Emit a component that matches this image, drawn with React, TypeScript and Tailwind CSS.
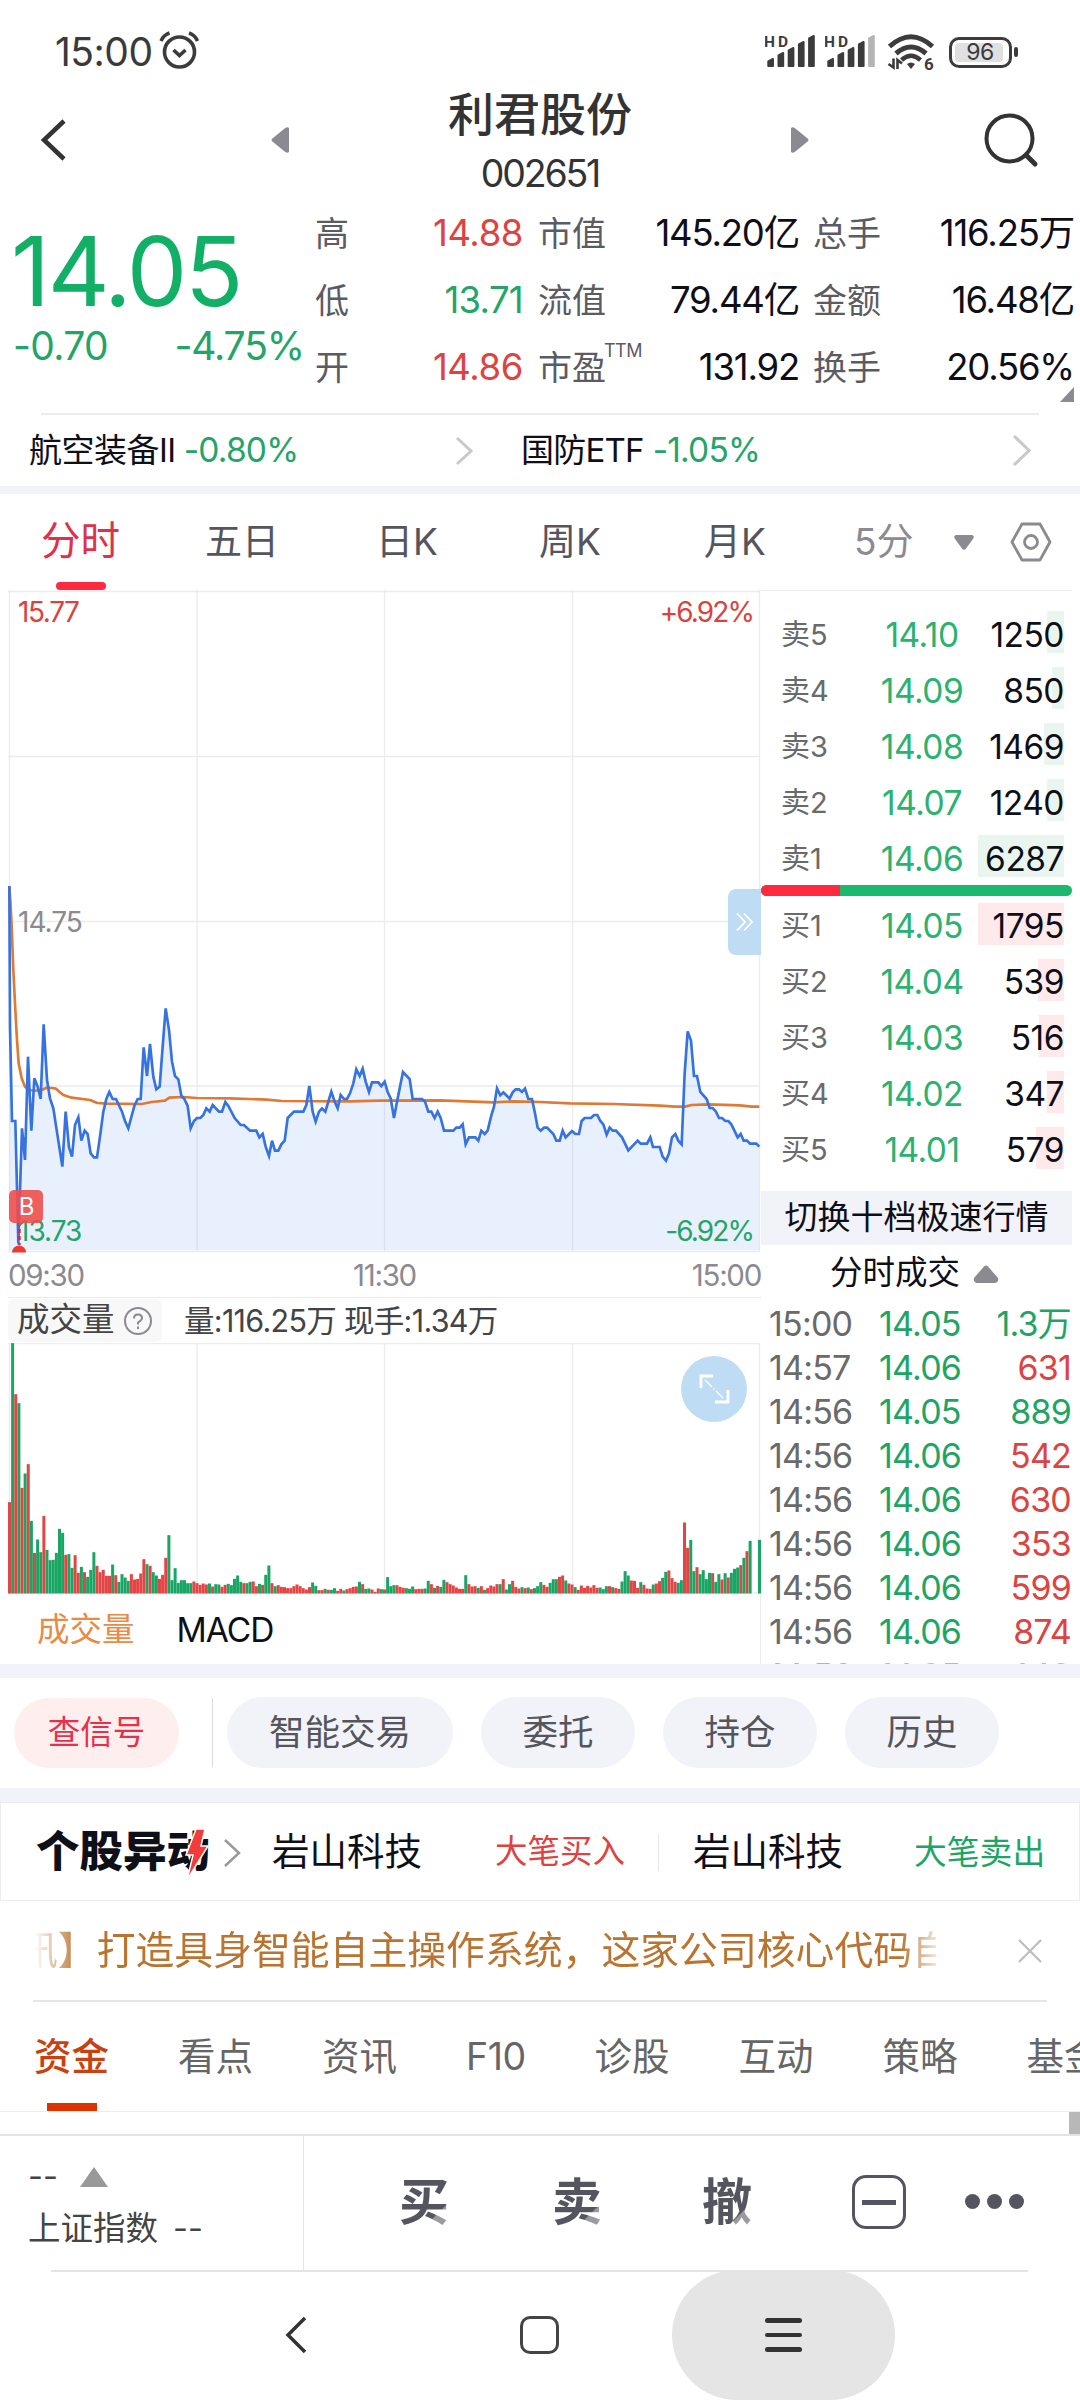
import React from "react";

const LEFT: number[] = [
  28,78,30,500,36,783,46,783,55,1150,66,805,75,900,84,590,94,812,103,655,113,680,122,717,131,493,141,660,150,715,160,745,187,920,197,755,207,862,216,890,225,795,235,772,244,842,254,812,263,822,272,880,282,892,291,892,300,830,310,755,319,717,328,696,338,717,348,717,366,755,375,783,385,805,403,738,413,717,422,717,431,562,441,648,450,552,460,650,469,688,479,680,488,560,497,445,507,510,516,605,525,648,535,658,544,707,553,717,563,738,572,805,582,783,591,774,601,774,610,765,619,745,629,755,638,735,657,755,666,755,676,726,685,738,704,774,722,795,732,795,750,812,769,812,778,832,788,822,797,860,807,888,816,842,825,872,835,872,844,853,854,842,863,774,882,755,910,755,919,735,928,678,938,755,947,785,957,755,966,745,976,755,994,695,1003,722,1013,745,1022,705,1032,717,1041,717,1050,700,1060,670,1069,628,1079,648,1088,626,1097,665,1107,696,1116,667,1135,667,1144,678,
];
const RIGHT: number[] = [
  14,665,23,696,32,715,42,774,51,725,60,680,69,636,89,657,98,717,126,717,135,725,145,755,154,755,164,774,173,755,182,774,192,812,220,812,229,803,239,803,248,793,257,853,267,832,286,832,295,842,304,812,314,822,323,812,333,770,342,740,351,685,361,706,370,697,389,716,398,697,407,688,417,688,426,696,435,686,445,717,456,717,465,760,473,803,482,812,492,803,501,803,520,822,529,842,539,842,548,812,557,832,576,813,586,822,597,822,605,783,614,774,633,774,642,765,652,765,661,783,670,793,680,824,689,803,698,812,708,812,726,832,745,871,773,842,782,851,801,851,811,832,819,861,839,861,848,890,858,902,867,880,876,832,886,822,895,842,905,853,914,640,923,514,933,542,942,648,951,648,961,696,980,717,989,744,998,744,1008,755,1017,774,1026,774,1036,783,1045,783,1054,793,1073,832,1082,822,1091,842,1101,842,1110,851,1129,851,1138,860,
];
const toPoints = (v: number[], dx: number) => {
  const out: string[] = [];
  for (let i = 0; i < v.length; i += 2) out.push(`${v[i] + dx},${v[i + 1]}`);
  return out.join(" ");
};
const PRICE = `${toPoints(LEFT, 0)} ${toPoints(RIGHT, 1140)}`;
const AVG = toPoints(
  [28,78,31,120,35,200,40,330,46,450,51,540,56,610,65,655,75,680,84,688,94,691,120,692,140,683,155,684,168,686,178,695,190,705,215,713,270,720,292,729,320,731,425,732,455,726,495,722,508,713,550,711,590,714,690,715,800,719,845,723,1050,724,1140,722,1320,721,1480,727,1540,724,1620,726,1710,730,1840,732,1980,737,2025,740,2055,740,2075,735,2125,733,2220,736,2255,740,2278,740],
  0,
);

const VOLUME =
  "r274 g751 r598 g571 r317 g360 r388 g218 r122 g162 g124 r233 g131 g100 g101 g122 g194 g182 r116 g118 g77 r115 r62 g80 r64 g50 g71 g124 r83 r64 r71 r53 r53 g87 r55 g35 g58 g48 g38 r58 r42 r44 r60 r103 g88 r83 g64 g54 r44 r56 r107 g175 g40 g76 g32 g40 g40 g31 g31 r36 r31 r26 r30 r27 g30 r21 g28 g27 r20 r26 g29 g25 g44 g54 g35 r31 g31 g35 r36 r22 g29 r26 g56 g84 r31 g22 r25 r20 r19 r16 r16 r22 r27 r22 r16 r12 r19 g33 g23 r10 r10 g14 r11 g11 g16 r8 r14 g9 r13 r16 r20 r21 g35 r28 g14 g15 r12 r5 r15 g13 r12 g49 g22 g25 r25 r20 r17 g16 g14 g21 r13 r14 r14 g15 g38 r28 g17 r23 g20 g41 r34 r28 r24 r18 r14 r14 g55 r28 r21 r22 g17 r22 g11 r16 r24 r21 r28 g28 r43 g12 g28 r38 r20 r15 g19 r16 g18 r13 g16 g22 g34 r26 r20 g32 g43 g43 r50 r54 g39 r30 r27 g19 r11 r24 r17 r23 r18 r25 r17 g18 g13 g22 r22 g19 r16 r14 g36 g67 g54 r39 r38 r17 g34 r26 r15 r14 g27 r30 r37 g47 g65 r69 r46 r35 g32 g40 r213 r137 g161 g67 r79 g58 g70 g43 g62 r61 g35 g58 r42 g61 r48 g62 g74 g78 r85 g107 r127 g158 g0 g0 g161".split(" ");

function PriceChart() {
  return (
    <svg className="absolute inset-0" width="753" height="663" viewBox="0 0 753 663">
      <g stroke="#ececee" strokeWidth="1.3">
        <path d="M1.5 0V662M189 0V662M376.5 0V662M564.5 0V662M751.5 0V662M0 1.5H752M0 166.5H752M0 331.5H752M0 496H752M0 661.5H752" fill="none" />
      </g>
      <g transform="translate(-8 270) scale(0.33333)">
        <polygon points={`28,1171 ${PRICE} 2278,1171`} fill="#3b7af0" fillOpacity="0.11" />
        <polyline points={AVG} fill="none" stroke="#de7a35" strokeWidth="8" strokeLinejoin="round" />
        <polyline points={PRICE} fill="none" stroke="#3672e0" strokeWidth="8" />
      </g>
      <path d="M11.2 625V655" stroke="#c0305c" strokeWidth="3" strokeDasharray="4 3" />
      <path d="M4 662.5a7 7 0 1 1 14 0z" fill="#ea3b33" />
    </svg>
  );
}

function VolumeChart() {
  return (
    <svg className="absolute inset-0" width="753" height="251" viewBox="0 0 753 251">
      <path d="M1.5 0V250M189 0V250M376.5 0V250M564.5 0V250M751.5 0V250M0 .7H752M0 250H752" fill="none" stroke="#ececee" strokeWidth="1.3" />
      {VOLUME.map((v, i) => {
        const h = Number(v.slice(1)) / 3;
        return (
          <rect key={i} x={i * 3.125} y={250.5 - h} width={3} height={h} fill={v[0] === "r" ? "#e24543" : "#19a564"} />
        );
      })}
    </svg>
  );
}

const Chevron = ({ w, h, s = 3, c = "#c9c9cc" }: { w: number; h: number; s?: number; c?: string }) => (
  <svg width={w} height={h} viewBox={`0 0 ${w} ${h}`} className="shrink-0">
    <path d={`M2 2L${w - 2} ${h / 2}L2 ${h - 2}`} fill="none" stroke={c} strokeWidth={s} />
  </svg>
);

function Signal({ weak }: { weak?: boolean }) {
  return (
    <svg width="52" height="36" viewBox="0 0 52 36">
      <text x="-1" y="12.5" fontSize="15.5" fontWeight="700" fontFamily="Roboto, sans-serif" fill="#3c3c3c" textLength="24">HD</text>
      {[8, 14, 19, 25, 31].map((h, i) => {
        const x = 2.3 + i * 10.2;
        const c = weak && i === 4 ? "#b5b5b5" : "#3c3c3c";
        return <path key={i} d={`M${x + 1} ${32}V${35.5 - h}L${x + 5.7} ${33 - h}V32Z`} fill={c} stroke={c} strokeWidth="2" strokeLinejoin="round" />;
      })}
    </svg>
  );
}

function StatusBar() {
  return (
    <div className="flex h-[88px] items-center pl-[55px] pt-4 text-[#3a3a3a]">
      <span className="w-[104px] text-[39px] tracking-[-0.5px]">15:00</span>
      <svg width="42" height="40" viewBox="0 0 42 40" fill="none" stroke="#3c3c3c" strokeWidth="3.6" className="-mt-1">
        <circle cx="20.500" cy="22" r="15" />
        <path d="M14.5 20L20.500 25.500L26.500 20" />
        <path d="M2 11Q4.500 5 10.500 3M38.500 11Q36 5 30 3" />
      </svg>
      <div className="ml-auto flex items-center pr-[62px]">
        <Signal />
        <div className="ml-[8px]"><Signal weak /></div>
        <svg width="48" height="38" viewBox="0 0 48 38" fill="none" stroke="#3c3c3c" strokeWidth="5" className="ml-[10px]">
          <path d="M2.500 13.500Q24 -6 45.500 13.500" />
          <path d="M9 20.500Q24 7.500 39 20.500" />
          <path d="M14.500 27Q24 18.500 33.500 27" strokeWidth="4.500" />
          <path d="M20 31Q24 28 28 31L24 36Z" fill="#3c3c3c" stroke="none" />
          <path d="M6.500 25.500V34.500L1.500 31M10.500 36V27L15 30.500" strokeWidth="2.600" />
          <text x="37" y="36.500" fontSize="17" fontWeight="700" fontFamily="Roboto, sans-serif" fill="#3c3c3c" stroke="none">6</text>
        </svg>
        <div className="ml-[14px] flex items-center gap-[2px]">
          <div className="flex h-[31px] w-[63px] rounded-[10px] border-[3px] border-[#3c3c3c] p-[3px]">
            <div className="flex w-[48px] items-center justify-center rounded-[4px] bg-[#e0e0e0] pl-[2px] text-[23px] leading-none tracking-[-0.5px]">96</div>
          </div>
          <div className="h-[10px] w-[4px] rounded-[2px] bg-[#3c3c3c]" />
        </div>
      </div>
    </div>
  );
}

function Header() {
  return (
    <div className="flex h-[112px] text-[#333]">
      <div className="flex w-[448px] items-start">
        <svg width="30" height="44" viewBox="0 0 30 44" className="ml-[38px] mt-[30px]">
          <path d="M26 3L6 22L26 41" fill="none" stroke="#333" strokeWidth="4.500" />
        </svg>
        <svg width="20" height="28" viewBox="0 0 20 28" className="ml-[202px] mt-[38px]">
          <path d="M19 2V26Q17 28 14 25L3 16Q0 14 3 12L14 3Q17 0 19 2Z" fill="#8b8a91" />
        </svg>
      </div>
      <div className="flex w-[184px] flex-col items-center">
        <div className="h-[52px] whitespace-nowrap text-[46px] font-medium leading-[52px]">利君股份</div>
        <div className="mt-[12px] text-[37.500px] leading-[44px] tracking-[-2.200px]">002651</div>
      </div>
      <div className="flex flex-1 items-start">
        <svg width="20" height="28" viewBox="0 0 20 28" className="ml-[158px] mt-[38px]">
          <path d="M1 2V26Q3 28 6 25L17 16Q20 14 17 12L6 3Q3 0 1 2Z" fill="#8b8a91" />
        </svg>
        <svg width="60" height="60" viewBox="0 0 60 60" className="ml-[170px] mt-[22px]" fill="none" stroke="#333" strokeWidth="4">
          <circle cx="29.500" cy="28.500" r="23" />
          <path d="M46 45L55 54" strokeWidth="5" strokeLinecap="round" />
        </svg>
      </div>
    </div>
  );
}

const STATS = [
  ["高", "14.88", "r", "市值", "145.20亿", "总手", "116.25万"],
  ["低", "13.71", "g", "流值", "79.44亿", "金额", "16.48亿"],
  ["开", "14.86", "r", "市盈", "131.92", "换手", "20.56%"],
];

function Quote() {
  return (
    <div className="relative flex h-[213px] text-[36.500px] tracking-[-1.2px]">
      <div className="flex w-[315px] flex-col text-[#12b066]">
        <div className="mt-[22px] h-[98px] pl-[11px] text-[96px] leading-[98px] tracking-[-2.400px]">14.05</div>
        <div className="mt-[4px] flex h-[44px] items-center justify-between pl-[13px] pr-[11px] text-[39px] leading-[44px] tracking-[-0.700px] text-[#24a468]">
          <span>-0.70</span>
          <span className="tracking-[-1.100px]">-4.75%</span>
        </div>
      </div>
      <div className="flex flex-1 flex-col">
        {STATS.map((s) => (
          <div key={s[0]} className="flex h-[67px] items-center whitespace-nowrap leading-[67px] text-[#0f0f18]">
            <span className="w-[50px] text-[34px] tracking-normal text-[#5b5b63]">{s[0]}</span>
            <span className={s[2] === "r" ? "w-[158px] text-right tracking-[-0.400px] text-[#dc4341]" : "w-[158px] text-right tracking-[-0.700px] text-[#24a468]"}>{s[1]}</span>
            <span className="ml-[15px] flex w-[102px] text-[34px] tracking-normal text-[#5b5b63]">
              {s[3]}
              {s[3] === "市盈" && <span className="-ml-[2px] -mt-[17px] text-[18px] tracking-[-0.5px]">TTM</span>}
            </span>
            <span className="w-[159px] text-right">{s[4]}</span>
            <span className="ml-[14px] w-[90px] text-[34px] tracking-normal text-[#5b5b63]">{s[5]}</span>
            <span className="w-[171px] text-right">{s[6]}</span>
          </div>
        ))}
      </div>
      <svg className="absolute bottom-[11px] right-[6px]" width="14" height="15" viewBox="0 0 14 15">
        <path d="M14 0V15H0z" fill="#8b8a91" />
      </svg>
    </div>
  );
}

function Sectors() {
  return (
    <>
      <div className="mx-[41px] h-[2px] bg-[#ececee]" />
      <div className="flex h-[71px] items-center whitespace-nowrap pl-[29px] text-[33.500px] tracking-[-0.8px] text-[#0f0f18]">
        <div className="flex w-[444px] items-center">
          <span className="text-[33px] tracking-[-0.5px]">航空装备II</span>
          <span className="ml-[8px] text-[#24a468]">-0.80%</span>
          <span className="ml-auto"><Chevron w={18} h={30} /></span>
        </div>
        <div className="ml-[48px] flex w-[510px] items-center">
          <span className="text-[33px] tracking-[-0.8px]">国防ETF</span>
          <span className="ml-[9px] text-[#24a468]">-1.05%</span>
          <span className="ml-auto"><Chevron w={19} h={33} /></span>
        </div>
      </div>
      <div className="h-[8px] bg-[#f2f3f8]" />
    </>
  );
}

function ChartTabs() {
  return (
    <div className="flex h-[96px] items-center pl-[41px] text-[37px] text-[#55555d]">
      <div className="relative flex h-full w-[164px] items-center text-[39.500px] text-[#e0304a]">
        分时
        <span className="absolute bottom-0 left-[15px] h-[8px] w-[50px] rounded-full bg-[#ff2a40]" />
      </div>
      <span className="w-[171px]">五日</span>
      <span className="w-[163px]">日K</span>
      <span className="w-[165px]">周K</span>
      <span className="w-[150px]">月K</span>
      <span className="w-[99px] text-[#8b8a91]">5分</span>
      <svg width="22" height="17" viewBox="0 0 22 17"><path d="M3 1H19Q22 2 20 5L13 14.500Q11 17 9 14.500L2 5Q0 2 3 1Z" fill="#8b8a91" /></svg>
      <svg width="42" height="42" viewBox="0 0 42 42" className="ml-[35px]" fill="none" stroke="#8b8a91" strokeWidth="2.800">
        <path d="M12 3H30L40 21L30 39H12L2 21Z" strokeLinejoin="round" />
        <circle cx="21" cy="21" r="6.500" />
      </svg>
    </div>
  );
}

const ASKS: [string, string, string, number][] = [
  ["卖5", "14.10", "1250", 17],
  ["卖4", "14.09", "850", 12],
  ["卖3", "14.08", "1469", 20],
  ["卖2", "14.07", "1240", 17],
  ["卖1", "14.06", "6287", 86],
];
const BIDS: [string, string, string, number][] = [
  ["买1", "14.05", "1795", 86],
  ["买2", "14.04", "539", 26],
  ["买3", "14.03", "516", 25],
  ["买4", "14.02", "347", 17],
  ["买5", "14.01", "579", 28],
];

function Level({ row, ask }: { row: [string, string, string, number]; ask?: boolean }) {
  return (
    <div className="flex h-[56px] items-center pl-[20px] text-[33.500px] tracking-[-0.5px]">
      <span className="w-[86px] text-[29px] tracking-normal text-[#6a6a6a]">{row[0]}</span>
      <span className="w-[110px] text-center text-[#2bb170]">{row[1]}</span>
      <span className="relative flex h-[42px] w-[87px] items-center justify-end text-[#0f0f18]">
        <span className={ask ? "absolute right-0 top-[-3px] h-full bg-[#e8f6ef]" : "absolute right-0 top-[-2px] h-full bg-[#feeaeb]"} style={{ width: row[3] }} />
        <span className="relative">{row[2]}</span>
      </span>
    </div>
  );
}

const TICKS = [
  ["15:00", "14.05", "1.3万", "g"],
  ["14:57", "14.06", "631", "r"],
  ["14:56", "14.05", "889", "g"],
  ["14:56", "14.06", "542", "r"],
  ["14:56", "14.06", "630", "r"],
  ["14:56", "14.06", "353", "r"],
  ["14:56", "14.06", "599", "r"],
  ["14:56", "14.06", "874", "r"],
  ["14:56", "14.05", "440", "g"],
];

function OrderBook() {
  return (
    <div className="h-[1074px] w-[319px] overflow-hidden">
      <div className="mr-[8px] h-[1px] bg-[#ececee]" />
      <div className="h-[16px]" />
      {ASKS.map((r) => <Level key={r[0]} row={r} ask />)}
      <div className="mt-[-2px] flex h-[11px] w-[311px] overflow-hidden rounded-full bg-[#1bb96f]">
        <div className="w-[79px] bg-[#ff2a40]" />
      </div>
      <div className="h-[2px]" />
      {BIDS.map((r) => <Level key={r[0]} row={r} />)}
      <div className="mt-[13px] flex h-[54px] w-[311px] items-center justify-center bg-[#f2f3f8] text-[33px] text-[#0f0f18]">切换十档极速行情</div>
      <div className="flex h-[57px] items-center pl-[69px] text-[32.500px] text-[#0f0f18]">
        分时成交
        <svg width="26" height="18" viewBox="0 0 26 18" className="ml-[13px]"><path d="M11 1.500Q13 -.5 15 1.500L25 13Q26 17 22 18H4Q0 17 1 13Z" fill="#8b8a91" /></svg>
      </div>
      <div className="mt-[-1px]">
        {TICKS.map((t, i) => (
          <div key={i} className={i === 8 ? "flex h-[44px] items-center pl-[8px] text-[34px] tracking-[-0.8px] opacity-50" : "flex h-[44px] items-center pl-[8px] text-[34px] tracking-[-0.8px]"}>
            <span className="w-[110px] text-[#6a6a6a]">{t[0]}</span>
            <span className="w-[90px] text-[#1ea565]">{t[1]}</span>
            <span className={t[3] === "g" ? "w-[102px] text-right text-[#1ea565]" : "w-[102px] text-right text-[#dc4341]"}>{t[2]}</span>
          </div>
        ))}
      </div>
    </div>
  );
}

function ChartColumn() {
  return (
    <div className="ml-[8px] flex w-[753px] flex-col">
      <div className="relative h-[663px] text-[28px] leading-[28px] tracking-[-1.400px]">
        <PriceChart />
        <div className="relative flex h-full flex-col justify-between pb-[8px] pl-[10px] pr-[8px] pt-[8px]">
          <div className="flex justify-between text-[#d8433f]"><span>15.77</span><span className="tracking-[-1.900px]">+6.92%</span></div>
          <div className="tracking-[-1px] text-[#8b8a91]">14.75</div>
          <div className="flex justify-between text-[#24a468]"><span className="tracking-[-1px]">13.73</span><span className="tracking-[-1.900px]">-6.92%</span></div>
        </div>
        <div className="absolute left-[1px] top-[600px] flex h-[33px] w-[34px] items-center justify-center rounded-[5px] bg-[#ee4f4b]/90 text-[24px] text-white">B</div>
        <div className="absolute right-0 top-[299px] flex h-[66px] w-[33px] items-center justify-center rounded-l-[8px] bg-[#bfdcf5]">
          <svg width="18" height="20" viewBox="0 0 18 20" fill="none" stroke="#fff" strokeWidth="1.800"><path d="M1 1.500L9 10L1 18.500M8 1.500L16 10L8 18.500" /></svg>
        </div>
      </div>
      <div className="flex h-[44px] items-center justify-between text-[29.500px] tracking-[-1.300px] text-[#8b8a91]">
        <span className="w-[120px]">09:30</span><span>11:30</span><span className="w-[120px] text-right">15:00</span>
      </div>
      <div className="h-[1px] bg-[#ececee]" />
      <div className="flex h-[45px] items-center whitespace-nowrap text-[29px] text-[#444]">
        <div className="flex h-[43px] w-[154px] items-center rounded-[6px] bg-[#f8f8f9] pl-[9px] text-[32.500px]">
          成交量
          <svg width="30" height="30" viewBox="0 0 30 30" className="ml-[8px]" fill="none" stroke="#8b8a91" strokeWidth="2">
            <circle cx="15" cy="15" r="13" />
            <path d="M11 12.500Q11 8.500 15 8.500T19 12Q19 14 15 16.500V18.500M15 20.500V23" />
          </svg>
        </div>
        <span className="ml-[22px] text-[30.500px] tracking-[-0.7px]">量:116.25万 现手:1.34万</span>
      </div>
      <div className="relative h-[251px]">
        <VolumeChart />
        <div className="absolute right-[14px] top-[13px] flex size-[66px] items-center justify-center rounded-full bg-[#bfdcf5]">
          <svg width="32" height="32" viewBox="0 0 32 32" fill="none" stroke="#fff" strokeWidth="2.800">
            <path d="M3 15V3H15M30 17V29H17" />
            <path d="M7 7L25 25" strokeWidth="1.300" strokeDasharray="10 2 1.500 2" />
          </svg>
        </div>
      </div>
      <div className="flex flex-1 items-center border-r border-[#ececee] pl-[29px] pt-[2px] text-[32.500px]">
        <span className="text-[#e98a47]">成交量</span>
        <span className="ml-[42px] text-[33.500px] tracking-[-1px] text-[#0f0f18]">MACD</span>
      </div>
    </div>
  );
}

function Actions() {
  return (
    <>
      <div className="h-[14px] bg-[#f2f3f8]" />
      <div className="flex h-[110px] items-start pl-[14px] pt-[19px] text-[35.500px] text-[#55555d]">
        <div className="mt-px flex h-[70px] w-[165px] items-center justify-center rounded-full bg-[#ffeeee] text-[32.500px] text-[#e8304a]">查信号</div>
        <div className="ml-[33px] mt-px h-[69px] w-px bg-[#dcdce0]" />
        <div className="ml-[14px] flex gap-[28px]">
          <div className="flex h-[71px] w-[226px] items-center justify-center rounded-full bg-[#f2f3f8]">智能交易</div>
          <div className="flex h-[71px] w-[154px] items-center justify-center rounded-full bg-[#f2f3f8]">委托</div>
          <div className="flex h-[71px] w-[154px] items-center justify-center rounded-full bg-[#f2f3f8]">持仓</div>
          <div className="flex h-[71px] w-[154px] items-center justify-center rounded-full bg-[#f2f3f8]">历史</div>
        </div>
      </div>
      <div className="h-[14px] bg-[#f2f3f8]" />
    </>
  );
}

function Movers() {
  return (
    <div className="flex h-[99px] items-center whitespace-nowrap border border-[#ececee] pl-[35px] text-[37.500px] text-[#0f0f18]">
      <div className="relative w-[187px] text-[43.500px] font-black">
        个股异动
        <svg width="28" height="54" viewBox="0 0 28 54" className="absolute left-[147px] top-[9px]">
          <path d="M13 1H22L18 18H25L4 52L10 27H3Z" fill="#f23c3c" stroke="#fff" strokeWidth="1.500" />
        </svg>
      </div>
      <div className="flex items-center pt-[2px]">
        <Chevron w={18} h={30} s={2.5} c="#9a9a9a" />
        <span className="ml-[31px] w-[223px]">岩山科技</span>
        <span className="w-[163px] text-[32.500px] text-[#dc4341]">大笔买入</span>
        <span className="h-[37px] w-px bg-[#e6e6e8]" />
        <span className="ml-[34px] w-[221px]">岩山科技</span>
        <span className="text-[32.800px] text-[#1ea565]">大笔卖出</span>
      </div>
    </div>
  );
}

function News() {
  return (
    <>
      <div className="flex h-[99px] items-center pl-[34px]">
        <div className="w-[902px] overflow-hidden whitespace-nowrap text-[38.850px] text-[#b97430] [mask-image:linear-gradient(to_right,transparent_0,#000_5%,#000_96%,transparent_101%)]">
          <span className="-ml-[15px]">讯】打造具身智能自主操作系统，这家公司核心代码自</span>
        </div>
        <svg width="26" height="26" viewBox="0 0 26 26" className="ml-[81px]"><path d="M2 2L24 24M24 2L2 24" stroke="#bdbdc0" strokeWidth="2.200" /></svg>
      </div>
      <div className="mx-[33px] h-[2px] bg-[#e6e6e8]" />
    </>
  );
}

function InfoTabs() {
  return (
    <div className="flex h-[110px] gap-[69px] overflow-hidden whitespace-nowrap border-b border-[#ececee] pl-[34px] text-[37.500px] leading-[110px] text-[#666]">
      <div className="relative font-medium text-[#c9410f]">
        资金
        <span className="absolute bottom-0 left-[13px] h-[8px] w-[50px] bg-[#dd3300]" />
      </div>
      <span>看点</span>
      <span>资讯</span>
      <span className="w-[60px] tracking-[-0.5px]">F10</span>
      <span>诊股</span>
      <span>互动</span>
      <span>策略</span>
      <span>基金</span>
    </div>
  );
}

function BottomBar() {
  const glyph =
    "w-[50px] bg-[linear-gradient(135deg,#55555f_0%,#55555f_72%,#9a9aa0_74%)] bg-clip-text text-[50px] font-bold leading-[60px] text-transparent";
  return (
    <>
      <div className="flex h-[22px] justify-end"><div className="w-[11px] bg-[#b8b8b8]" /></div>
      <div className="flex h-[136px] border-t-2 border-[#e4e4e6]">
        <div className="flex w-[304px] flex-col border-r border-[#e4e4e6] pl-[28px] text-[32.500px] text-[#444]">
          <div className="mt-[22px] flex h-[38px] items-center">
            <span className="w-[51px] leading-none">--</span>
            <svg width="30" height="20" viewBox="0 0 30 20"><path d="M15 0L29 20H1z" fill="#999" /></svg>
          </div>
          <div className="mt-[9px] flex items-center whitespace-nowrap leading-[48px]">
            <span className="w-[145px]">上证指数</span>
            <span>--</span>
          </div>
        </div>
        <div className="flex flex-1 items-start pt-[36px]">
          <span className={`${glyph} ml-[95px]`}>买</span>
          <span className={`${glyph} ml-[103px]`}>卖</span>
          <span className={`${glyph} ml-[100px]`}>撤</span>
          <div className="ml-[100px] mt-[3px] flex h-[54px] w-[54px] items-center justify-center rounded-[14px] border-[3px] border-[#55555f]">
            <div className="h-[5px] w-[34px] bg-[#55555f]" />
          </div>
          <div className="ml-[59px] mt-[22px] flex gap-[7px]">
            <i className="size-[15px] rounded-full bg-[#55555f]" />
            <i className="size-[15px] rounded-full bg-[#55555f]" />
            <i className="size-[15px] rounded-full bg-[#55555f]" />
          </div>
        </div>
      </div>
    </>
  );
}

function NavBar() {
  return (
    <div className="relative h-[130px]">
      <div className="absolute left-[51px] right-[52px] top-0 h-[2px] bg-[#e4e4e6]" />
      <div className="relative flex h-full items-center">
        <svg width="24" height="38" viewBox="0 0 24 38" className="ml-[284px]"><path d="M21 2L4 19L21 36" fill="none" stroke="#333" strokeWidth="3.500" /></svg>
        <div className="ml-[212px] h-[38px] w-[39px] rounded-[10px] border-[3.500px] border-[#444]" />
        <div className="ml-[113px] flex h-[130px] w-[223px] flex-col items-center justify-center gap-[10px] rounded-full bg-[#e5e5e5]">
          <div className="h-[4.500px] w-[37px] rounded bg-[#333]" />
          <div className="h-[4.500px] w-[37px] rounded bg-[#333]" />
          <div className="h-[4.500px] w-[37px] rounded bg-[#333]" />
        </div>
      </div>
    </div>
  );
}

export default function App() {
  return (
    <div className="h-[2400px] w-[1080px] overflow-hidden bg-white font-['Inter','Noto_Sans_CJK_SC',sans-serif]">
      <StatusBar />
      <Header />
      <Quote />
      <Sectors />
      <ChartTabs />
      <div className="flex h-[1074px]">
        <ChartColumn />
        <OrderBook />
      </div>
      <Actions />
      <Movers />
      <News />
      <InfoTabs />
      <BottomBar />
      <NavBar />
    </div>
  );
}
